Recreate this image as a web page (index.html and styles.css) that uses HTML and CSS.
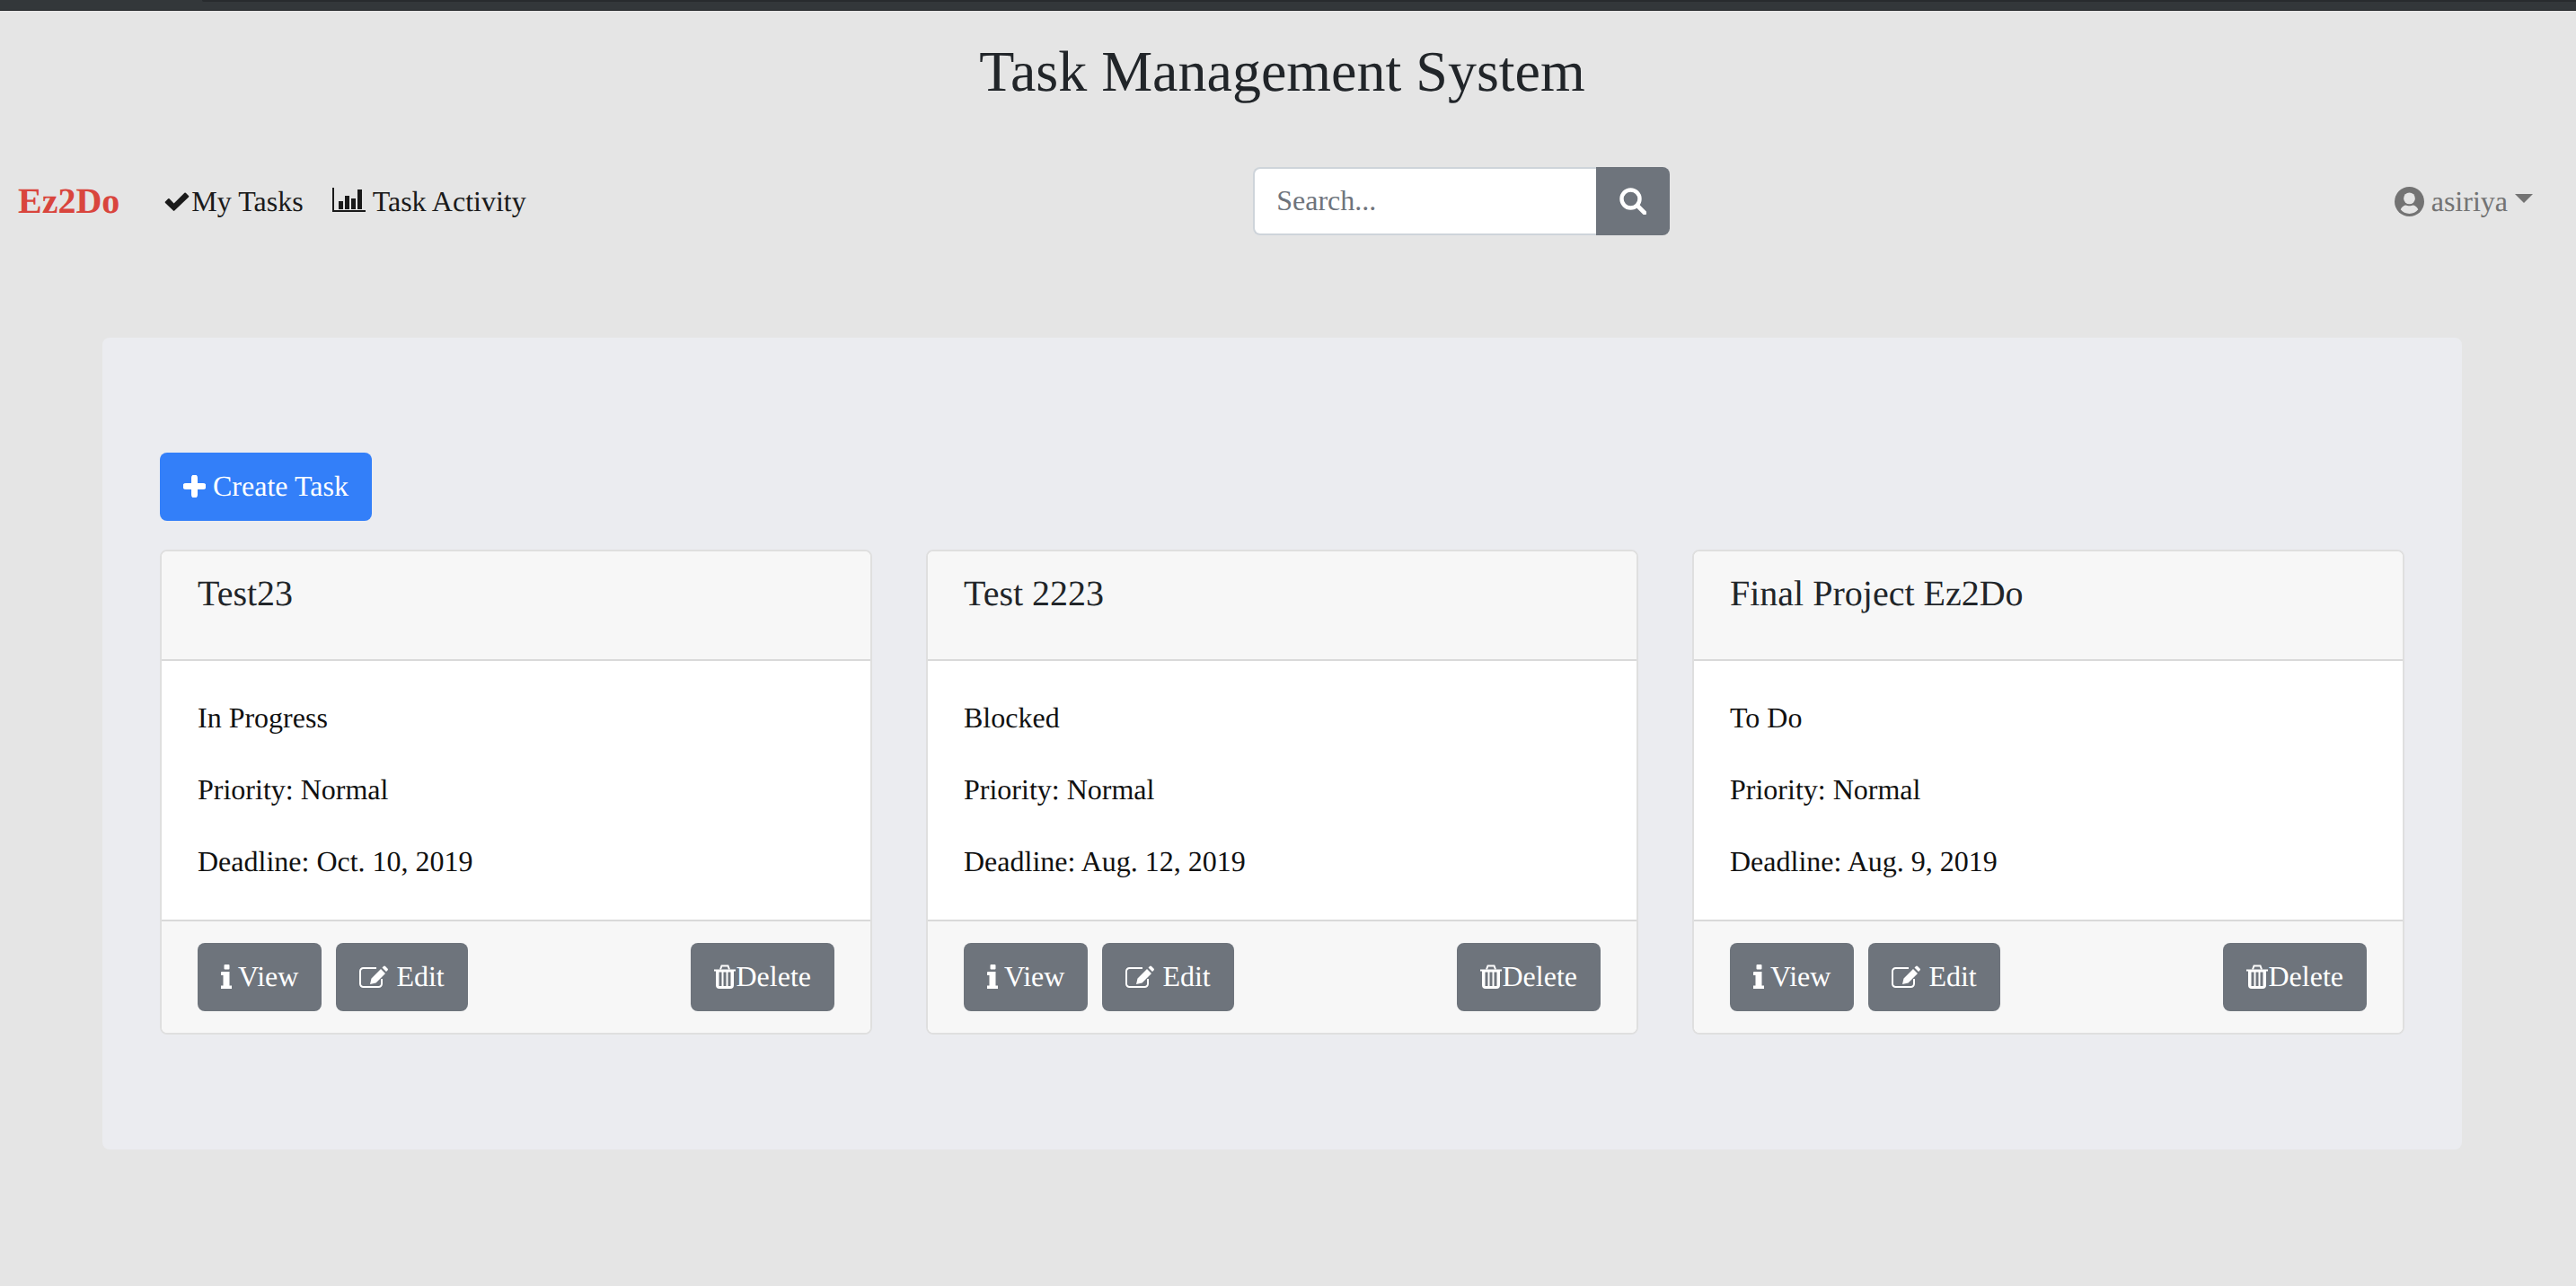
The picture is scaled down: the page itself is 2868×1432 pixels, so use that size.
FILE: index.html
```html
<!DOCTYPE html>
<html lang="en">
<head>
  <meta charset="UTF-8" />
  <title>Task Management System</title>
  <link rel="stylesheet" href="styles.css">
</head>
<body>

  <div class="top-strip"><div class="top-strip-tab"></div></div>

  <div class="page">
    <h1 class="page-title">Task Management System</h1>

    <nav class="navbar">
      <a class="brand" href="#">Ez2Do</a>
      <a class="nav-link link-tasks" href="#">
        <svg class="icon icon-check" viewBox="0 0 28 21"><path d="M1 10.5 4.2 7.300a1 1 0 0 1 1.400 0L10.600 12.400 22.400.8a1 1 0 0 1 1.400 0L27 4a1 1 0 0 1 0 1.400L11.300 20.600a1 1 0 0 1-1.400 0L1 11.900a1 1 0 0 1 0-1.400Z"/></svg>
        My Tasks
      </a>
      <a class="nav-link link-activity" href="#">
        <svg class="icon icon-chart" viewBox="0 0 37 27"><path d="M0 0h2v25h35v2H0Z"/><path d="M7 15h5v9H7ZM14 9h5v15h-5ZM21 12h5v12h-5ZM28 2h5v22h-5Z"/></svg>
        Task Activity
      </a>

      <form class="search">
        <input class="search-input" type="text" placeholder="Search...">
        <button class="search-btn" type="button">
          <svg class="icon icon-search" viewBox="0 0 30 30"><circle cx="12.500" cy="12.500" r="10" fill="none" stroke="#fff" stroke-width="4.400"/><path d="M20 20l8 8" stroke="#fff" stroke-width="4.600" stroke-linecap="round"/></svg>
        </button>
      </form>

      <a class="user-menu" href="#">
        <svg class="icon icon-user" viewBox="0 0 32 32"><circle cx="16" cy="16" r="16" fill="#737373"/><circle cx="16" cy="12.500" r="6.200" fill="#e5e5e5"/><path d="M6.500 24.500c1.500-3.200 4-4.600 5.500-4.600 1.400 0 2.200.8 4 .8s2.600-.8 4-.8c1.500 0 4 1.400 5.500 4.600C23.200 27.500 19.800 29 16 29s-7.200-1.500-9.500-4.500Z" fill="#e5e5e5"/></svg>
        <span>asiriya</span>
        <span class="caret"></span>
      </a>
    </nav>

    <main class="panel">
      <a class="btn btn-primary btn-create" href="#">
        <svg class="icon icon-plus" viewBox="0 0 25 25"><path d="M12.500 3v19M3 12.500h19" stroke="#fff" stroke-width="7" stroke-linecap="round"/></svg>
        Create Task
      </a>

      <div class="task-grid">

        <div class="card">
          <div class="card-header"><h5 class="card-title">Test23</h5></div>
          <div class="card-body">
            <p>In Progress</p>
            <p>Priority: Normal</p>
            <p>Deadline: Oct. 10, 2019</p>
          </div>
          <div class="card-footer">
            <a class="btn btn-view" href="#">
              <svg class="icon icon-info" viewBox="0 0 12 27"><path d="M3.500 1a1 1 0 0 1 1-1h4a1 1 0 0 1 1 1v3.500a1 1 0 0 1-1 1h-4a1 1 0 0 1-1-1ZM0 9a1 1 0 0 1 1-1h8.500v15.500H12V27H0v-3.500h2.500V12H0Z"/></svg>
              View
            </a>
            <a class="btn btn-edit" href="#">
              <svg class="icon icon-edit" viewBox="0 0 32 25"><path d="M25 15v5.500a3.500 3.500 0 0 1-3.500 3.500H4.500A3.500 3.500 0 0 1 1 20.500V6.500A3.500 3.500 0 0 1 4.500 3H19" fill="none" stroke="#fff" stroke-width="2"/><path d="M13.500 14.500 24 4l5 5-10.500 10.500L12 21ZM25.500 2.500 27 1a1.500 1.500 0 0 1 2 0l2.500 2.500a1.500 1.500 0 0 1 0 2L30 7Z" fill="#fff"/></svg>
              Edit
            </a>
            <a class="btn btn-delete" href="#">
              <svg class="icon icon-trash" viewBox="0 0 24 27"><path d="M0 5.500h24v2H22V23a4 4 0 0 1-4 4H6a4 4 0 0 1-4-4V7.500H0Z" fill="#fff"/><path d="M7 5.500 8.500 1.500h7L17 5.500" fill="none" stroke="#fff" stroke-width="2"/><path d="M5.500 8.500h3V24h-3ZM10.500 8.500h3V24h-3ZM15.500 8.500h3V24h-3Z" fill="#6e747c"/></svg>
              Delete
            </a>
          </div>
        </div>

        <div class="card">
          <div class="card-header"><h5 class="card-title">Test 2223</h5></div>
          <div class="card-body">
            <p>Blocked</p>
            <p>Priority: Normal</p>
            <p>Deadline: Aug. 12, 2019</p>
          </div>
          <div class="card-footer">
            <a class="btn btn-view" href="#">
              <svg class="icon icon-info" viewBox="0 0 12 27"><path d="M3.500 1a1 1 0 0 1 1-1h4a1 1 0 0 1 1 1v3.500a1 1 0 0 1-1 1h-4a1 1 0 0 1-1-1ZM0 9a1 1 0 0 1 1-1h8.500v15.500H12V27H0v-3.500h2.500V12H0Z"/></svg>
              View
            </a>
            <a class="btn btn-edit" href="#">
              <svg class="icon icon-edit" viewBox="0 0 32 25"><path d="M25 15v5.500a3.500 3.500 0 0 1-3.500 3.500H4.500A3.500 3.500 0 0 1 1 20.500V6.500A3.500 3.500 0 0 1 4.500 3H19" fill="none" stroke="#fff" stroke-width="2"/><path d="M13.500 14.500 24 4l5 5-10.500 10.500L12 21ZM25.500 2.500 27 1a1.500 1.500 0 0 1 2 0l2.500 2.500a1.500 1.500 0 0 1 0 2L30 7Z" fill="#fff"/></svg>
              Edit
            </a>
            <a class="btn btn-delete" href="#">
              <svg class="icon icon-trash" viewBox="0 0 24 27"><path d="M0 5.500h24v2H22V23a4 4 0 0 1-4 4H6a4 4 0 0 1-4-4V7.500H0Z" fill="#fff"/><path d="M7 5.500 8.500 1.500h7L17 5.500" fill="none" stroke="#fff" stroke-width="2"/><path d="M5.500 8.500h3V24h-3ZM10.500 8.500h3V24h-3ZM15.500 8.500h3V24h-3Z" fill="#6e747c"/></svg>
              Delete
            </a>
          </div>
        </div>

        <div class="card">
          <div class="card-header"><h5 class="card-title">Final Project Ez2Do</h5></div>
          <div class="card-body">
            <p>To Do</p>
            <p>Priority: Normal</p>
            <p>Deadline: Aug. 9, 2019</p>
          </div>
          <div class="card-footer">
            <a class="btn btn-view" href="#">
              <svg class="icon icon-info" viewBox="0 0 12 27"><path d="M3.500 1a1 1 0 0 1 1-1h4a1 1 0 0 1 1 1v3.500a1 1 0 0 1-1 1h-4a1 1 0 0 1-1-1ZM0 9a1 1 0 0 1 1-1h8.500v15.500H12V27H0v-3.500h2.500V12H0Z"/></svg>
              View
            </a>
            <a class="btn btn-edit" href="#">
              <svg class="icon icon-edit" viewBox="0 0 32 25"><path d="M25 15v5.500a3.500 3.500 0 0 1-3.500 3.500H4.500A3.500 3.500 0 0 1 1 20.500V6.500A3.500 3.500 0 0 1 4.500 3H19" fill="none" stroke="#fff" stroke-width="2"/><path d="M13.500 14.500 24 4l5 5-10.500 10.500L12 21ZM25.500 2.500 27 1a1.500 1.500 0 0 1 2 0l2.500 2.500a1.500 1.500 0 0 1 0 2L30 7Z" fill="#fff"/></svg>
              Edit
            </a>
            <a class="btn btn-delete" href="#">
              <svg class="icon icon-trash" viewBox="0 0 24 27"><path d="M0 5.500h24v2H22V23a4 4 0 0 1-4 4H6a4 4 0 0 1-4-4V7.500H0Z" fill="#fff"/><path d="M7 5.500 8.500 1.500h7L17 5.500" fill="none" stroke="#fff" stroke-width="2"/><path d="M5.500 8.500h3V24h-3ZM10.500 8.500h3V24h-3ZM15.500 8.500h3V24h-3Z" fill="#6e747c"/></svg>
              Delete
            </a>
          </div>
        </div>

      </div>
    </main>
  </div>

</body>
</html>
```

FILE: styles.css
```css
* {
  box-sizing: border-box;
}

html,
body {
  height: 100%;
}

body {
  margin: 0;
  background-color: #e5e5e5;
  color: #212529;
  font-family: "Liberation Serif", "Times New Roman", serif;
  font-size: 32px;
  line-height: 48px;
  text-rendering: geometricPrecision;
  overflow: hidden;
}

a {
  text-decoration: none;
  color: inherit;
}

.top-strip {
  height: 12px;
  background-color: #33373a;
  border-bottom: 1px solid #1f2123;
  padding-left: 225px;
}

.top-strip-tab {
  height: 2px;
  background-color: #282b2e;
  border-bottom-left-radius: 6px;
}

.page {
  width: 2855px;
}

.page-title {
  margin: 30px 0 68px;
  text-align: center;
  font-size: 64px;
  font-weight: 400;
  line-height: 76px;
}

/* navbar */
.navbar {
  display: flex;
  align-items: center;
  height: 76px;
  padding: 0 35px 0 20px;
  color: #1a1a1a;
}

.brand {
  font-size: 40px;
  font-weight: 700;
  color: #d9453d;
  margin-right: 50px;
}

.nav-link {
  display: flex;
  align-items: center;
}

.link-tasks {
  gap: 2px;
  margin-right: 32px;
}

.link-activity {
  gap: 8px;
  margin-right: 3px;
}

.icon {
  display: block;
  flex-shrink: 0;
  fill: currentColor;
}

.icon-check {
  width: 28px;
  height: 21px;
}

.icon-chart {
  width: 37px;
  height: 27px;
  margin-top: -3px;
}

.search {
  display: flex;
  margin: 0 auto;
  height: 76px;
}

.search-input {
  width: 382px;
  height: 76px;
  padding: 0 0 2px 24px;
  border: 2px solid #ced4da;
  border-right: 0;
  border-radius: 8px 0 0 8px;
  background-color: #fff;
  font-family: inherit;
  font-size: 32px;
  color: #495057;
}

.search-input::placeholder {
  color: #6e747c;
}

.search-btn {
  width: 82px;
  height: 76px;
  padding: 0;
  border: 0;
  border-radius: 0 8px 8px 0;
  background-color: #6e747c;
  display: flex;
  align-items: center;
  justify-content: center;
}

.icon-search {
  width: 30px;
  height: 30px;
}

.user-menu {
  display: flex;
  align-items: center;
  color: #737373;
}

.icon-user {
  width: 33px;
  height: 33px;
  margin-right: 8px;
}

.caret {
  width: 0;
  height: 0;
  margin-left: 8px;
  margin-bottom: 6px;
  border-top: 10px solid #737373;
  border-left: 10px solid transparent;
  border-right: 10px solid transparent;
}

/* main panel */
.panel {
  margin: 114px 114px 0;
  padding: 128px 64px;
  border-radius: 8px;
  background-color: #ebecf0;
}

.btn {
  display: inline-flex;
  align-items: center;
  height: 76px;
  padding: 0 26px 2px;
  gap: 9px;
  border-radius: 8px;
  background-color: #6e747c;
  color: #fff;
  fill: #fff;
}

.btn-primary {
  background-color: #337ff9;
}

.btn-create {
  margin-bottom: 32px;
  gap: 8px;
}

.icon-plus {
  width: 25px;
  height: 25px;
}

.btn-view {
  gap: 7px;
}

.icon-info {
  width: 12px;
  height: 27px;
}

.icon-edit {
  width: 32px;
  height: 25px;
}

.icon-trash {
  width: 24px;
  height: 27px;
}

.task-grid {
  display: grid;
  grid-template-columns: repeat(3, 1fr);
  gap: 60px;
}

.card {
  border: 2px solid #dfdfdf;
  border-radius: 8px;
  background-color: #fff;
  overflow: hidden;
}

.card-header {
  padding: 23px 40px 0;
  height: 122px;
  border-bottom: 2px solid #d9d9d9;
  background-color: #f7f7f7;
}

.card-title {
  margin: 0;
  font-size: 40px;
  font-weight: 400;
  line-height: 48px;
}

.card-body {
  padding: 39px 40px 41px;
  color: #111;
}

.card-body p {
  margin: 0 0 32px;
}

.card-body p:last-child {
  margin-bottom: 0;
}

.card-footer {
  display: flex;
  gap: 16px;
  padding: 24px 40px;
  border-top: 2px solid #d9d9d9;
  background-color: #f7f7f7;
}

.btn-delete {
  margin-left: auto;
  gap: 1px;
}
```
